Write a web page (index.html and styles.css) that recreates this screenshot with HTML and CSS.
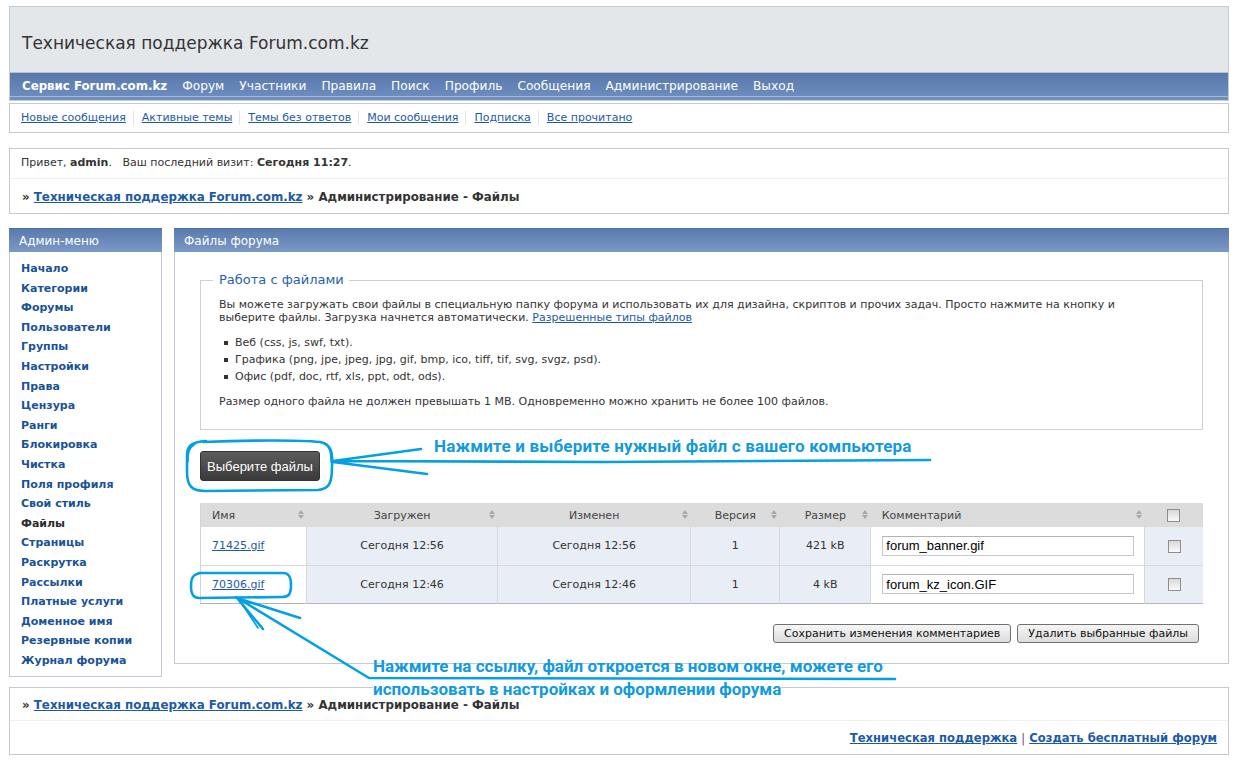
FILE: index.html
```html
<!DOCTYPE html>
<html lang="ru">
<head>
<meta charset="utf-8">
<title>Администрирование - Файлы</title>
<link rel="stylesheet" href="styles.css">
</head>
<body>
<div class="page">
  <header class="header">
    <div class="brand">Техническая поддержка Forum.com.kz</div>
    <nav class="mainnav">
      <a href="#" class="service">Сервис Forum.com.kz</a>
      <a href="#">Форум</a>
      <a href="#">Участники</a>
      <a href="#">Правила</a>
      <a href="#">Поиск</a>
      <a href="#">Профиль</a>
      <a href="#">Сообщения</a>
      <a href="#">Администрирование</a>
      <a href="#">Выход</a>
    </nav>
  </header>

  <div class="box subnav">
    <a href="#">Новые сообщения</a>
    <a href="#">Активные темы</a>
    <a href="#">Темы без ответов</a>
    <a href="#">Мои сообщения</a>
    <a href="#">Подписка</a>
    <a href="#">Все прочитано</a>
  </div>

  <div class="box welcome">
    <div class="welcome-line">Привет, <b>admin</b>.&nbsp;&nbsp; Ваш последний визит: <b>Сегодня 11:27</b>.</div>
    <div class="crumbs">» <a href="#">Техническая поддержка Forum.com.kz</a> » Администрирование - Файлы</div>
  </div>

  <div class="columns">
    <aside class="panel sidebar">
      <div class="panel-head">Админ-меню</div>
      <ul class="menu panel-body">
        <li><a href="#">Начало</a></li>
        <li><a href="#">Категории</a></li>
        <li><a href="#">Форумы</a></li>
        <li><a href="#">Пользователи</a></li>
        <li><a href="#">Группы</a></li>
        <li><a href="#">Настройки</a></li>
        <li><a href="#">Права</a></li>
        <li><a href="#">Цензура</a></li>
        <li><a href="#">Ранги</a></li>
        <li><a href="#">Блокировка</a></li>
        <li><a href="#">Чистка</a></li>
        <li><a href="#">Поля профиля</a></li>
        <li><a href="#">Свой стиль</a></li>
        <li><a href="#" class="active">Файлы</a></li>
        <li><a href="#">Страницы</a></li>
        <li><a href="#">Раскрутка</a></li>
        <li><a href="#">Рассылки</a></li>
        <li><a href="#">Платные услуги</a></li>
        <li><a href="#">Доменное имя</a></li>
        <li><a href="#">Резервные копии</a></li>
        <li><a href="#">Журнал форума</a></li>
      </ul>
    </aside>

    <main class="panel main">
      <div class="panel-head">Файлы форума</div>
      <div class="panel-body content">
        <fieldset class="info">
          <legend>Работа с файлами</legend>
          <p>Вы можете загружать свои файлы в специальную папку форума и использовать их для дизайна, скриптов и прочих задач. Просто нажмите на кнопку и выберите файлы. Загрузка начнется автоматически. <a href="#">Разрешенные типы файлов</a></p>
          <ul class="types">
            <li>Веб (css, js, swf, txt).</li>
            <li>Графика (png, jpe, jpeg, jpg, gif, bmp, ico, tiff, tif, svg, svgz, psd).</li>
            <li>Офис (pdf, doc, rtf, xls, ppt, odt, ods).</li>
          </ul>
          <p>Размер одного файла не должен превышать 1 MB. Одновременно можно хранить не более 100 файлов.</p>
        </fieldset>

        <div class="upload">
          <button class="btn-dark" type="button">Выберите файлы</button>
        </div>

        <table class="files">
          <colgroup>
            <col class="c-name"><col class="c-date"><col class="c-date2"><col class="c-ver"><col class="c-size"><col class="c-comm"><col class="c-chk">
          </colgroup>
          <thead>
            <tr>
              <th class="left">Имя<span class="sort"></span></th>
              <th>Загружен<span class="sort"></span></th>
              <th>Изменен<span class="sort"></span></th>
              <th>Версия<span class="sort"></span></th>
              <th>Размер<span class="sort"></span></th>
              <th class="left">Комментарий<span class="sort"></span></th>
              <th><input type="checkbox" class="chk"></th>
            </tr>
          </thead>
          <tbody>
            <tr>
              <td class="left white"><a href="#">71425.gif</a></td>
              <td>Сегодня 12:56</td>
              <td>Сегодня 12:56</td>
              <td>1</td>
              <td>421 kB</td>
              <td class="white comm"><input type="text" class="comment" value="forum_banner.gif"></td>
              <td><input type="checkbox" class="chk"></td>
            </tr>
            <tr>
              <td class="left white"><a href="#">70306.gif</a></td>
              <td>Сегодня 12:46</td>
              <td>Сегодня 12:46</td>
              <td>1</td>
              <td>4 kB</td>
              <td class="white comm"><input type="text" class="comment" value="forum_kz_icon.GIF"></td>
              <td><input type="checkbox" class="chk"></td>
            </tr>
          </tbody>
        </table>

        <div class="actions">
          <button type="button" class="btn">Сохранить изменения комментариев</button>
          <button type="button" class="btn">Удалить выбранные файлы</button>
        </div>
      </div>
    </main>
  </div>

  <footer class="box footer">
    <div class="crumbs foot-crumbs">» <a href="#">Техническая поддержка Forum.com.kz</a> » Администрирование - Файлы</div>
    <div class="foot-links"><a href="#">Техническая поддержка</a> <span class="pipe">|</span> <a href="#">Создать бесплатный форум</a></div>
  </footer>
</div>

<div class="note note1">Нажмите и выберите нужный файл с вашего компьютера</div>
<div class="note note2"><span class="l1">Нажмите на ссылку, файл откроется в новом окне, можете его</span><br><span class="l2">использовать в настройках и оформлении форума</span></div>

<svg class="annot" width="1235" height="773" viewBox="0 0 1235 773" fill="none" stroke="#03a0e4" stroke-linecap="round" stroke-linejoin="round">
  <path stroke-width="2.6" d="M203 442 C250 440 300 440 320 442 C331 444 333 452 332 466 C332 482 330 489 318 490 L205 491 C192 491 187 486 187 472 L187 456 C187 446 191 442 206 441"/>
  <path stroke-width="1.6" d="M195 444 C189 448 188 452 188 462 M323 443 C330 446 331 452 331 462"/>
  <path stroke-width="2.6" d="M333 461 L421 449 M333 462 L427 474 M333 461 L605 462 L930 460"/>
  <path stroke-width="2.6" d="M199 573 L283 573 C289 573 291 577 291 585 C291 594 289 597 282 597 L199 598 C193 598 191 594 191 586 C191 578 193 574 201 573"/>
  <path stroke-width="2.6" d="M237 598 L263 629 M240 599 L300 618 M236 597 L369 678 L895 679"/>
  <path stroke-width="1.6" d="M240 601 L258 628"/>
</svg>
</body>
</html>
```
FILE: styles.css
```css
* { box-sizing: border-box; }

body {
  margin: 0;
  background: #ffffff;
  font-family: "DejaVu Sans", Verdana, sans-serif;
  font-size: 11px;
  color: #333333;
  position: relative;
}

a { color: #1d5aa6; }

.page {
  padding: 6px 6px 18px 9px;
}

/* ---------- header ---------- */
.header {
  border: 1px solid #c3cad2;
  background: #e3e7ea;
}

.brand {
  height: 65px;
  padding: 26px 0 0 12px;
  font-size: 17px;
  line-height: 20px;
  color: #333333;
}

.mainnav {
  height: 28px;
  display: flex;
  align-items: center;
  gap: 15px;
  padding-left: 12px;
  padding-bottom: 2px;
  border-top: 1px solid #b3c2d6;
  background: linear-gradient(#5878ab, #7090c2);
  box-shadow: inset 0 -3px 0 #6f8ec0, inset 0 -4px 0 #a6b8d4;
}

.mainnav a {
  color: #ffffff;
  text-decoration: none;
  font-size: 12.2px;
}

.mainnav a.service {
  font-weight: bold;
  font-size: 11.8px;
}

/* ---------- boxes ---------- */
.box {
  border: 1px solid #c3cad2;
  background: #ffffff;
}

.subnav {
  margin-top: 2px;
  height: 30px;
  display: flex;
  align-items: center;
  padding-left: 11px;
}

.subnav a {
  font-size: 11px;
  padding: 0 7px 0 8px;
  border-left: 1px solid #e4e4e4;
  line-height: 14px;
}

.subnav a:first-child {
  padding-left: 0;
  border-left: none;
}

.welcome { margin-top: 15px; }

.welcome-line {
  padding: 6px 11px 7px;
  line-height: 16px;
  border-bottom: 1px solid #eef0f2;
}

.crumbs {
  padding: 10px 12px 8px;
  line-height: 16px;
  font-size: 11.85px;
  font-weight: bold;
  color: #333333;
}

.crumbs a { color: #1d5aa6; }

/* ---------- columns ---------- */
.columns {
  margin-top: 14px;
  display: flex;
  gap: 12px;
  align-items: flex-start;
}

.panel-head {
  height: 24px;
  padding-left: 10px;
  line-height: 25px;
  font-size: 12px;
  color: #ffffff;
  background: linear-gradient(#5a7bae, #7b99c6);
  border-top: 1px solid #4f70a3;
}

.panel-body {
  border: 1px solid #c3cad2;
  border-top: none;
  background: #ffffff;
}

.sidebar { width: 153px; flex: none; }

.menu {
  list-style: none;
  margin: 0;
  padding: 7px 0 6px 11px;
}

.menu li {
  height: 19.6px;
  line-height: 19.6px;
}

.menu a {
  font-weight: bold;
  color: #1a5296;
  text-decoration: none;
}

.menu a.active { color: #2c2c2c; }

.main { flex: 1; }

.content {
  padding: 20px 25px 20px 25px;
}

/* ---------- fieldset ---------- */
.info {
  margin: 0;
  border: 1px solid #d0d0d0;
  padding: 0 30px 21px 18px;
}

.info legend {
  padding: 0 5px 0 6px;
  margin-left: -6px;
  font-size: 13px;
  line-height: 16px;
  color: #2862a8;
}

.info p {
  margin: 10px 0 0;
  line-height: 13px;
}

.types {
  list-style: none;
  margin: 10px 0 0;
  padding: 0;
}

.types li {
  position: relative;
  padding-left: 16px;
  line-height: 17px;
}

.types li::before {
  content: "";
  position: absolute;
  left: 5px;
  top: 7px;
  width: 4px;
  height: 4px;
  background: #333333;
}

/* ---------- upload ---------- */
.upload { margin-top: 21px; }

.btn-dark {
  width: 120px;
  height: 30px;
  border: 1px solid #333333;
  border-radius: 3px;
  background: linear-gradient(#5c5c5c, #3a3a3a);
  color: #ffffff;
  font-family: "Liberation Sans", Arial, sans-serif;
  font-size: 13px;
  padding: 0;
}

/* ---------- table ---------- */
.files {
  margin-top: 22px;
  width: 100%;
  border-collapse: collapse;
  table-layout: fixed;
  border-left: 1px solid #d4d4d4;
  border-bottom: 1px solid #b4b4b4;
}

.c-name { width: 106px; }
.c-date { width: 191px; }
.c-date2 { width: 193px; }
.c-ver { width: 89px; }
.c-size { width: 91px; }
.c-comm { width: 274px; }
.c-chk { width: 58px; }

.files th {
  position: relative;
  height: 24px;
  background: #dcdcdc;
  font-weight: normal;
  color: #444444;
  text-align: center;
  padding: 0;
}

.files th.left { text-align: left; padding-left: 11px; }

.sort {
  position: absolute;
  right: 2px;
  top: 7px;
  width: 7px;
  height: 10px;
}

.sort::before,
.sort::after {
  content: "";
  position: absolute;
  left: 0;
  border-left: 3.5px solid transparent;
  border-right: 3.5px solid transparent;
}

.sort::before { top: 0; border-bottom: 4px solid #a8a8a8; }
.sort::after { top: 5px; border-top: 4px solid #a8a8a8; }

.files td {
  height: 38px;
  text-align: center;
  background: #e9edf5;
  border-left: 1px solid #d8d8d8;
  border-top: 1px solid #d8d8d8;
  color: #333333;
  padding: 0;
}

.files tbody tr:first-child td { border-top: none; }
.files td:first-child { border-left: none; }

.files td.white { background: #ffffff; }
.files td.left { text-align: left; padding-left: 11px; }
.files td.comm { text-align: left; padding-left: 11px; }

.comment {
  width: 252px;
  height: 20px;
  border: 1px solid #c8c8c8;
  border-top-color: #b4b4b4;
  padding: 0 3px;
  font-family: "Liberation Sans", Arial, sans-serif;
  font-size: 13px;
  color: #000000;
}

.chk {
  appearance: none;
  -webkit-appearance: none;
  width: 13px;
  height: 13px;
  margin: 0;
  vertical-align: middle;
  border: 1px solid #8e8e8e;
  background: linear-gradient(#d8d8d8, #fafafa);
}

/* ---------- actions ---------- */
.actions {
  margin-top: 20px;
  display: flex;
  justify-content: flex-end;
  gap: 6px;
  padding-right: 4px;
}

.btn {
  height: 19px;
  padding: 0 10px;
  border: 1px solid #707070;
  border-radius: 3px;
  background: linear-gradient(#f6f6f6, #dddddd);
  font-family: "DejaVu Sans", Verdana, sans-serif;
  font-size: 11px;
  color: #111111;
}

/* ---------- footer ---------- */
.footer { margin-top: 10px; }

.foot-crumbs {
  padding: 9px 12px 7px;
  border-bottom: 1px solid #eef0f2;
}

.foot-links {
  padding: 9px 11px 8px;
  line-height: 16px;
  text-align: right;
  font-size: 11.6px;
  font-weight: bold;
}

.pipe { color: #7a4a7a; font-weight: normal; }

/* ---------- annotations ---------- */
.annot {
  position: absolute;
  left: 0;
  top: 0;
  pointer-events: none;
  z-index: 3;
}

.note {
  position: absolute;
  z-index: 2;
  font-family: Roboto, "Noto Sans", sans-serif;
  font-weight: bold;
  font-size: 17px;
  color: #129ade;
  white-space: nowrap;
}

.note1 {
  left: 434px;
  top: 436px;
  line-height: 20px;
  letter-spacing: 0.18px;
}

.note2 {
  left: 373px;
  top: 655px;
  line-height: 23px;
}

.note2 .l2 {
  display: inline-block;
  line-height: 15px;
  background: #ffffff;
}
```
